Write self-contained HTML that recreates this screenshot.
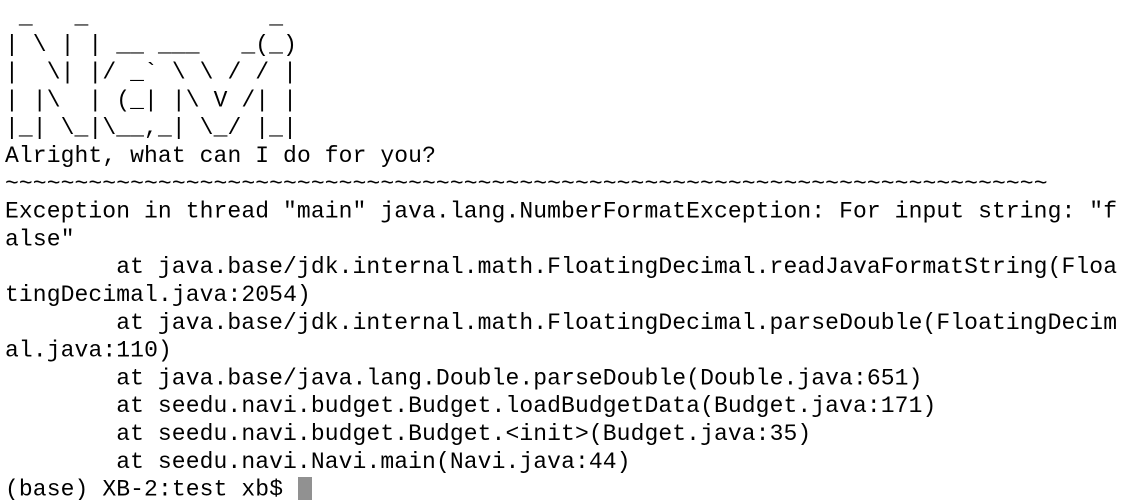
<!DOCTYPE html>
<html><head><meta charset="utf-8"><style>
html,body{margin:0;padding:0;background:#fff;width:1128px;height:500px;overflow:hidden}
svg{position:absolute;left:0;top:0}
text{font-family:"Liberation Mono",monospace;font-size:23px;fill:#000;white-space:pre}
</style></head><body>
<svg width="1128" height="500" xml:space="preserve">
<text x="5" y="23" textLength="278" lengthAdjust="spacing"> _   _             _</text>
<text x="5" y="50.8" textLength="291.9" lengthAdjust="spacing">| \ | | __ ___   _(_)</text>
<text x="5" y="78.6" textLength="291.9" lengthAdjust="spacing">|  \| |/ _` \ \ / / |</text>
<text x="5" y="106.4" textLength="291.9" lengthAdjust="spacing">| |\  | (_| |\ V /| |</text>
<text x="5" y="134.2" textLength="291.9" lengthAdjust="spacing">|_| \_|\__,_| \_/ |_|</text>
<text x="5" y="162" textLength="430.9" lengthAdjust="spacing">Alright, what can I do for you?</text>
<text x="5" y="189.8" textLength="1042.5" lengthAdjust="spacing">~~~~~~~~~~~~~~~~~~~~~~~~~~~~~~~~~~~~~~~~~~~~~~~~~~~~~~~~~~~~~~~~~~~~~~~~~~~</text>
<text x="5" y="217.6" textLength="1112" lengthAdjust="spacing">Exception in thread "main" java.lang.NumberFormatException: For input string: "f</text>
<text x="5" y="245.4" textLength="69.5" lengthAdjust="spacing">alse"</text>
<text x="116.2" y="273.2" textLength="1000.8" lengthAdjust="spacing">at java.base/jdk.internal.math.FloatingDecimal.readJavaFormatString(Floa</text>
<text x="5" y="301" textLength="305.8" lengthAdjust="spacing">tingDecimal.java:2054)</text>
<text x="116.2" y="328.8" textLength="1000.8" lengthAdjust="spacing">at java.base/jdk.internal.math.FloatingDecimal.parseDouble(FloatingDecim</text>
<text x="5" y="356.6" textLength="166.8" lengthAdjust="spacing">al.java:110)</text>
<text x="116.2" y="384.4" textLength="806.2" lengthAdjust="spacing">at java.base/java.lang.Double.parseDouble(Double.java:651)</text>
<text x="116.2" y="412.2" textLength="820.1" lengthAdjust="spacing">at seedu.navi.budget.Budget.loadBudgetData(Budget.java:171)</text>
<text x="116.2" y="440" textLength="695" lengthAdjust="spacing">at seedu.navi.budget.Budget.&lt;init&gt;(Budget.java:35)</text>
<text x="116.2" y="467.8" textLength="514.3" lengthAdjust="spacing">at seedu.navi.Navi.main(Navi.java:44)</text>
<text x="5" y="495.6" textLength="278" lengthAdjust="spacing">(base) XB-2:test xb$</text>
<rect x="298" y="477" width="14" height="24" fill="#919191"/>
</svg>
</body></html>
